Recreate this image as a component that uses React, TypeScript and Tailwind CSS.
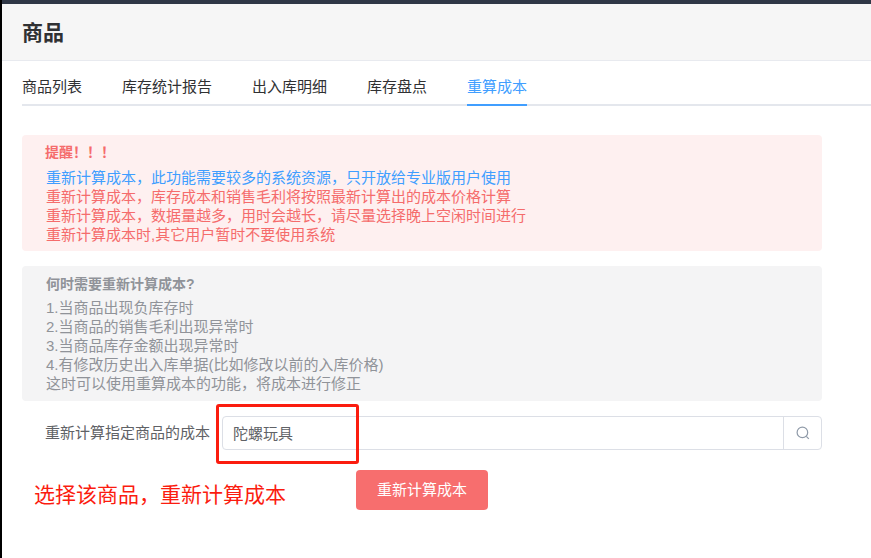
import React from "react";

const font = { fontFamily: '"Liberation Sans", "Noto Sans CJK SC", sans-serif' };
const tabs = ["商品列表", "库存统计报告", "出入库明细", "库存盘点"];

export default function App() {
  return (
    <div className="relative h-[558px] w-[871px] overflow-hidden bg-white" style={font}>
      <div className="h-1 bg-[#2f3746]" />
      <div className="ml-0.5">
        <div className="flex h-[57px] items-center border-b border-[#e8eaef] bg-[#f6f6f6] pl-5 pt-0.5">
          <h1 className="text-[21px] font-bold text-[#303133]">商品</h1>
        </div>
        <div className="mt-[12px] ml-5 flex h-[33px] gap-10 border-b-2 border-[#e4e7ed] text-[15px] leading-[28px] text-[#303133]">
          {tabs.map((t) => (
            <div key={t}>{t}</div>
          ))}
          <div className="-mb-0.5 h-[33px] border-b-2 border-[#409eff] text-[#409eff]">重算成本</div>
        </div>
        <div className="ml-5 mt-[29px] w-[800px]">
          <div className="h-[116px] rounded bg-[#fef0f0] pl-6 pt-[7px] text-[15px] leading-[19px] text-[#f56c6c]">
            <div className="mb-[6px] -ml-px text-[14px] font-bold leading-[20px]">提醒！！！</div>
            <div className="text-[#409eff]">重新计算成本，此功能需要较多的系统资源，只开放给专业版用户使用</div>
            <div>重新计算成本，库存成本和销售毛利将按照最新计算出的成本价格计算</div>
            <div>重新计算成本，数据量越多，用时会越长，请尽量选择晚上空闲时间进行</div>
            <div>重新计算成本时,其它用户暂时不要使用系统</div>
          </div>
          <div className="mt-[15px] h-[135px] rounded bg-[#f4f4f5] pl-6 pt-[8px] text-[15px] leading-[19px] text-[#909399]">
            <div className="mb-[4px] text-[14px] font-bold leading-[20px]">何时需要重新计算成本?</div>
            <div>1.当商品出现负库存时</div>
            <div>2.当商品的销售毛利出现异常时</div>
            <div>3.当商品库存金额出现异常时</div>
            <div>4.有修改历史出入库单据(比如修改以前的入库价格)</div>
            <div>这时可以使用重算成本的功能，将成本进行修正</div>
          </div>
          <div className="mt-[15px] flex h-[34px] items-center">
            <label className="w-[200px] pl-[23px] text-[15px] leading-[34px] text-[#606266]">重新计算指定商品的成本</label>
            <div className="flex h-[34px] flex-1 items-center rounded border border-[#dcdfe6]">
              <div className="flex-1 pl-[10px] pt-[2px] text-[15px] text-[#606266]">陀螺玩具</div>
              <div className="flex h-full w-[38px] items-center justify-center border-l border-[#dcdfe6]">
                <svg width="14" height="14" viewBox="0 0 14 14" fill="none" stroke="#8f9aa8" strokeWidth="1.2">
                  <circle cx="6.4" cy="6.4" r="5.3" />
                  <path d="M10.3 10.3 L12.8 12.8" />
                </svg>
              </div>
            </div>
          </div>
          <div className="mt-[20px] flex h-10 items-start">
            <div className="ml-3 w-[322px] pt-[10px] text-[21px] leading-[30px] text-[#fb1c0f]">选择该商品，重新计算成本</div>
            <button className="h-10 w-[132px] rounded bg-[#f76e6e] text-[15px] text-white">重新计算成本</button>
          </div>
        </div>
      </div>
      <div className="absolute left-0 top-0 h-full w-0.5 bg-black" />
      <div className="absolute left-[216px] top-[404px] h-[60px] w-[143px] rounded-[3px] border-[3px] border-[#fb1c0f]" />
    </div>
  );
}
